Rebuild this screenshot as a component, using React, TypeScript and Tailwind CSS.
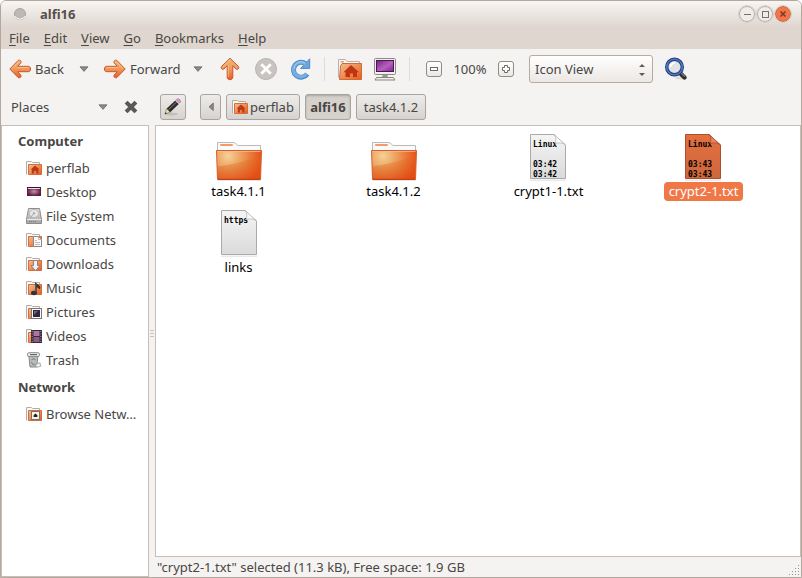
import React, { useState } from "react";

type FolderKind =
  | "home"
  | "documents"
  | "downloads"
  | "music"
  | "pictures"
  | "videos"
  | "network";

function Gradients() {
  return (
    <svg className="absolute h-0 w-0" aria-hidden="true">
      <defs>
        <linearGradient id="arrow" x1="0" y1="0" x2="0" y2="1">
          <stop offset="0" stopColor="#f3b878" />
          <stop offset="0.5" stopColor="#ee9a5c" />
          <stop offset="1" stopColor="#ec5a26" />
        </linearGradient>
        <radialGradient id="folder" gradientUnits="userSpaceOnUse" cx="13" cy="23" r="34">
          <stop offset="0" stopColor="#f5d197" />
          <stop offset="0.45" stopColor="#ec9855" />
          <stop offset="1" stopColor="#ea4c16" />
        </radialGradient>
        <linearGradient id="shade" x1="0" y1="0" x2="0" y2="1">
          <stop offset="0" stopColor="#d9741e" stopOpacity="0.35" />
          <stop offset="1" stopColor="#dc4a10" stopOpacity="0.75" />
        </linearGradient>
        <linearGradient id="small" x1="0" y1="0" x2="1" y2="1">
          <stop offset="0" stopColor="#f3c08c" />
          <stop offset="1" stopColor="#ea5a1e" />
        </linearGradient>
        <linearGradient id="paper" x1="0" y1="0" x2="0" y2="1">
          <stop offset="0" stopColor="#f5f5f5" />
          <stop offset="1" stopColor="#dadada" />
        </linearGradient>
        <linearGradient id="paperSelected" x1="0" y1="0" x2="0" y2="1">
          <stop offset="0" stopColor="#e4703e" />
          <stop offset="1" stopColor="#cd673d" />
        </linearGradient>
        <linearGradient id="screen" x1="0" y1="0" x2="1" y2="1">
          <stop offset="0" stopColor="#762482" />
          <stop offset="0.55" stopColor="#b860c0" />
          <stop offset="1" stopColor="#7c2488" />
        </linearGradient>
        <linearGradient id="metal" x1="0" y1="0" x2="0" y2="1">
          <stop offset="0" stopColor="#dedede" />
          <stop offset="1" stopColor="#a5a5a5" />
        </linearGradient>
        <radialGradient id="aubergine">
          <stop offset="0" stopColor="#c88ab0" />
          <stop offset="1" stopColor="#5a1a3c" />
        </radialGradient>
      </defs>
    </svg>
  );
}

function Arrow({ turn = "" }: { turn?: string }) {
  return (
    <svg className={`shrink-0 ${turn}`} width="22" height="22" viewBox="0 0 22 22" aria-hidden="true">
      <path
        d="M0.8 11 L9 2.6 C10.5 1.4 13 3 11.8 4.9 L8.7 8.3 H19.3 C22.3 8.3 22.3 13.7 19.3 13.7 H8.7 L11.8 17.1 C13 19 10.5 20.6 9 19.4 Z"
        fill="url(#arrow)"
        stroke="#c9562b"
        strokeWidth="1"
        strokeLinejoin="round"
      />
      <path d="M3 10.5 L9.8 3.6 M8 9.4 H19" stroke="#f8d0a4" strokeWidth="0.8" fill="none" opacity="0.8" />
    </svg>
  );
}

function UpArrow() {
  return (
    <svg width="22" height="24" viewBox="0 0 22 24" aria-hidden="true">
      <path
        d="M11 1.2 L19.4 9.4 C20.6 11 19 13.2 17.1 12 L13.8 8.8 V20 C13.8 23.6 8.2 23.6 8.2 20 V8.8 L4.9 12 C3 13.2 1.4 11 2.6 9.4 Z"
        fill="url(#arrow)"
        stroke="#c9562b"
        strokeLinejoin="round"
      />
      <path d="M10.8 2.8 L4 9.6 M9.3 8.2 V20" stroke="#f8d0a4" strokeWidth="0.8" fill="none" opacity="0.8" />
    </svg>
  );
}

function Caret({ className = "" }: { className?: string }) {
  return (
    <svg className={className} width="10" height="6" viewBox="0 0 10 6" aria-hidden="true">
      <path d="M1 0.8 H9 L5 5.4 Z" fill="#8c8a87" stroke="#62605d" strokeWidth="0.7" />
    </svg>
  );
}

function StopIcon() {
  return (
    <svg width="24" height="24" viewBox="0 0 24 24" aria-hidden="true">
      <circle cx="12" cy="12" r="10.5" fill="#c9c4c2" stroke="#b9b4b2" />
      <path d="M8.3 8.3 L15.7 15.7 M15.7 8.3 L8.3 15.7" stroke="#fff" strokeWidth="2.8" strokeLinecap="square" />
    </svg>
  );
}

function ReloadIcon() {
  return (
    <svg width="22" height="24" viewBox="0 0 22 24" aria-hidden="true">
      <path d="M17.2 17 A7.5 7.5 0 1 1 15.8 7" fill="none" stroke="#4f8ac6" strokeWidth="5" />
      <path d="M19.7 1.8 V11.4 H10.6 Z" fill="#6aa5dd" stroke="#4f8ac6" strokeLinejoin="round" />
      <path d="M16.7 16.6 A7.2 7.2 0 1 1 15.6 7.3" fill="none" stroke="#76aee2" strokeWidth="3.4" />
      <path d="M4 12 A7 7 0 0 1 15 6" fill="none" stroke="#a9cdf0" strokeWidth="1" />
    </svg>
  );
}

function HomeIcon() {
  return (
    <svg width="26" height="24" viewBox="0 0 26 24" aria-hidden="true">
      <path d="M1.5 20.5 V2.5 H8.5 L10 4.5 H22.5 V20" fill="#f7f7f5" stroke="#b6b2ad" />
      <path d="M3.5 4.8 H7" stroke="#f0a070" strokeWidth="1.4" />
      <path d="M2.5 22.5 L3.5 9 L5 6.5 H24.5 V22.5 H3 Z" fill="url(#small)" stroke="#d06a32" />
      <path d="M14 8 L22 15.2 H20 V20 H16 V16.5 H13 V20 H8.5 V15.2 H6.5 Z" fill="#bd3512" />
    </svg>
  );
}

function ComputerIcon() {
  return (
    <svg width="24" height="24" viewBox="0 0 24 24" aria-hidden="true">
      <rect x="1.5" y="1.5" width="21" height="16" rx="1" fill="#eeeeea" stroke="#8d8b86" />
      <rect x="3.5" y="3.5" width="17" height="11" fill="url(#screen)" stroke="#4d1554" />
      <path d="M9.5 18 H14.5 L15 21 H9 Z" fill="#9b9994" />
      <path d="M3.5 20.5 H20.5 L22 23 H2 Z" fill="#f0f0ed" stroke="#878580" />
    </svg>
  );
}

function SearchIcon() {
  return (
    <svg width="24" height="24" viewBox="0 0 24 24" aria-hidden="true">
      <ellipse cx="17" cy="21" rx="6" ry="1.5" fill="#dcdad7" />
      <path d="M16 16 L20.5 20.5" stroke="#302d2b" strokeWidth="4.4" strokeLinecap="round" />
      <path d="M17 16 L21 19.6" stroke="#8b8782" strokeWidth="1.2" />
      <circle cx="10.5" cy="10" r="7.8" fill="#e3e3e3" stroke="#203a79" strokeWidth="3.4" />
      <circle cx="10.5" cy="10" r="7.8" fill="none" stroke="#4c78c4" strokeWidth="1.6" />
      <path d="M6.5 10 A4 4 0 0 1 10.5 6" stroke="#fff" strokeWidth="2" fill="none" />
    </svg>
  );
}

function SmallFolder({ kind }: { kind: FolderKind }) {
  return (
    <svg className="shrink-0" width="16" height="16" viewBox="0 0 16 16" aria-hidden="true">
      <path d="M0.5 14.5 V1.5 H5.5 L6.5 2.5 H13.5 V13.5" fill="#fafaf9" stroke="#b5aca6" />
      <path d="M2.5 14.5 V4.5 H15.5 V14.5 Z" fill="url(#small)" stroke="#d66b3c" />
      {kind === "home" && (
        <path d="M9 5.4 L13.6 9.6 H12.4 V13.5 H10.2 V11 H8 V13.5 H5.8 V9.6 H4.6 Z" fill="#b83a18" />
      )}
      {kind === "documents" && (
        <>
          <path d="M7.5 4.5 H12.5 L15.5 7.5 V14.5 H7.5 Z" fill="#fafafa" stroke="#888" />
          <path d="M12.5 4.5 V7.5 H15.5 M9 8.5 H11 M9 10.5 H14 M9 12.5 H14" fill="none" stroke="#bbb" />
        </>
      )}
      {kind === "downloads" && (
        <path d="M7.5 4.5 H11.5 V9.5 H14 L9.5 14.8 L5 9.5 H7.5 Z" fill="#f0f0f0" stroke="#858585" />
      )}
      {kind === "music" && (
        <>
          <path d="M9 13 V2 L14.5 6.8 L13.7 9.5 L10.8 7 V13 Z" fill="#333" />
          <ellipse cx="8" cy="13" rx="3" ry="2.2" fill="#333" />
          <path d="M9.8 3.5 V12" stroke="#888" strokeWidth="0.6" />
        </>
      )}
      {kind === "pictures" && (
        <>
          <rect x="5.5" y="4.5" width="10" height="10" fill="#fafafa" stroke="#777" />
          <rect x="7" y="6" width="7" height="7" fill="#32263e" />
          <path d="M8 7 H12 L8 11 Z" fill="#6c5e7c" />
        </>
      )}
      {kind === "videos" && (
        <>
          <rect x="5" y="2" width="11" height="13" fill="#3a2a35" />
          <rect x="7.5" y="3" width="6" height="5" fill="#a679a5" />
          <rect x="7.5" y="9" width="6" height="5" fill="#8d588d" />
          <path d="M6.2 3 V15 M14.9 3 V15" stroke="#c9bcc5" strokeWidth="0.8" strokeDasharray="1 1.5" />
        </>
      )}
      {kind === "network" && (
        <>
          <rect x="5.5" y="5.5" width="8" height="8" fill="#f3f3ec" stroke="#77746e" />
          <path d="M9.5 7.6 L11.4 9.2 V11 H7.6 V9.2 Z" fill="#222" />
        </>
      )}
    </svg>
  );
}

function DesktopIcon() {
  return (
    <svg className="shrink-0" width="16" height="16" viewBox="0 0 16 16" aria-hidden="true">
      <rect x="1" y="3" width="14" height="9" fill="url(#aubergine)" />
      <rect x="1" y="3" width="14" height="1" fill="#3b1529" />
      <path d="M2 4.5 H14" stroke="#e8dbe3" />
    </svg>
  );
}

function DiskIcon() {
  return (
    <svg className="shrink-0" width="16" height="16" viewBox="0 0 16 16" aria-hidden="true">
      <path d="M2.5 0.5 H13.5 L15.5 11.5 V15.5 H0.5 V11.5 Z" fill="url(#metal)" stroke="#8c8c8c" />
      <ellipse cx="8" cy="5.5" rx="4.7" ry="4" fill="#e6e6e6" stroke="#b8b8b8" />
      <circle cx="8" cy="5.3" r="1.2" fill="#b0b0b0" />
      <path d="M4 10 L7.5 6" stroke="#aaa" />
      <path d="M1 11.5 H15" stroke="#e8e8e8" />
      <path d="M3 13.5 H11" stroke="#777" strokeDasharray="1 1" />
    </svg>
  );
}

function TrashIcon() {
  return (
    <svg className="shrink-0" width="16" height="16" viewBox="0 0 16 16" aria-hidden="true">
      <path d="M2.8 3 L4 15 H10.5 L12.2 3 Z" fill="#b9bebb" stroke="#858a87" />
      <rect x="1.5" y="0.7" width="12" height="3.8" rx="1.5" fill="#e9ebea" stroke="#8a8f8c" />
      <path d="M4 2.6 H11" stroke="#666" strokeWidth="1.2" />
      <path d="M5.5 8 L7.5 6.5 L9.5 8 M5.3 10 L7 12.5 H9.5" stroke="#8b918e" fill="none" strokeWidth="1.3" />
      <path d="M9.5 12.5 L14 10.8 L14.7 14.3 L10.5 15.3 Z" fill="#f1f1f1" stroke="#999" strokeWidth="0.8" />
    </svg>
  );
}

function PencilIcon() {
  return (
    <svg width="20" height="18" viewBox="0 0 20 18" aria-hidden="true">
      <ellipse cx="8" cy="16" rx="7" ry="1.4" fill="#c2bfba" />
      <path d="M2 16 L3.6 10.7 L7.2 14.1 Z" fill="#f0e3a5" stroke="#8a8254" strokeWidth="0.7" />
      <path d="M3.7 10.5 L12.3 2.5 L15.8 6.1 L7.2 14.2 Z" fill="#2d2d2d" />
      <path d="M5.5 11.5 L13.8 4" stroke="#797979" />
      <path d="M12.3 2.6 L13.4 1.6 L16.8 5 L15.8 6.1 Z" fill="#c8cec8" />
      <path d="M13.4 1.6 C15.4 -0.6 19 2.6 16.8 5 Z" fill="#e2a0cb" stroke="#ad6694" strokeWidth="0.7" />
      <path d="M2 16 L2.6 14.2 L4 15.4 Z" fill="#222" />
    </svg>
  );
}

function FolderIcon() {
  return (
    <svg width="48" height="48" viewBox="0 0 48 48" aria-hidden="true">
      <path d="M2 46.5 H46 V48 H3 Z" fill="#e7e4e2" />
      <path d="M2.5 18 V9.5 H19 C21 9.5 21 12.5 24 12.5 H45.5 V18" fill="#fafafa" stroke="#bcbab8" />
      <rect x="5" y="11" width="13" height="2" rx="1" fill="#f39a6a" />
      <path d="M1.5 17.5 H46.5 L45.5 46.5 H2.5 Z" fill="url(#folder)" stroke="#d0602f" />
      <path d="M2 33.5 C20 31 35 27 46 21 L45 46 H3 Z" fill="url(#shade)" opacity="0.65" />
      <path d="M2.5 18.5 H45.5" stroke="#f7c08c" opacity="0.75" />
      <path d="M3 46.3 H45" stroke="#b93b10" />
    </svg>
  );
}

function TextFileIcon({ lines, selected }: { lines: string[]; selected: boolean }) {
  return (
    <svg width="38" height="48" viewBox="0 0 38 48" aria-hidden="true">
      <path d="M1 46.5 H37 V48 H1 Z" fill="#e9e9e9" />
      <path
        d="M1.5 1.5 H25 L36.5 12 V45.5 H1.5 Z"
        fill={selected ? "url(#paperSelected)" : "url(#paper)"}
        stroke={selected ? "#a9502c" : "#aaaaaa"}
      />
      <svg x="0" y="0" width="28" height="46">
        {lines.map((line, i) => (
          <text
            key={i}
            x="4"
            y={14 + i * 10}
            fontSize="8"
            fontWeight="bold"
            fontFamily="DejaVu Sans Mono, monospace"
            fill="#000"
          >
            {line}
          </text>
        ))}
      </svg>
      <path
        d="M25 1.5 C27 4 27.5 7.5 26 10.5 C30 9.2 34 10 36.5 12 Z"
        fill={selected ? "#e8875f" : "#fdfdfd"}
        stroke={selected ? "#a9502c" : "#b8b8b8"}
        strokeWidth="0.8"
      />
    </svg>
  );
}

const menus = ["File", "Edit", "View", "Go", "Bookmarks", "Help"];

const places: { label: string; icon: React.ReactNode }[] = [
  { label: "perflab", icon: <SmallFolder kind="home" /> },
  { label: "Desktop", icon: <DesktopIcon /> },
  { label: "File System", icon: <DiskIcon /> },
  { label: "Documents", icon: <SmallFolder kind="documents" /> },
  { label: "Downloads", icon: <SmallFolder kind="downloads" /> },
  { label: "Music", icon: <SmallFolder kind="music" /> },
  { label: "Pictures", icon: <SmallFolder kind="pictures" /> },
  { label: "Videos", icon: <SmallFolder kind="videos" /> },
  { label: "Trash", icon: <TrashIcon /> },
];

const files: { name: string; lines?: string[] }[] = [
  { name: "task4.1.1" },
  { name: "task4.1.2" },
  { name: "crypt1-1.txt", lines: ["Linux", "", "03:42", "03:42"] },
  { name: "crypt2-1.txt", lines: ["Linux", "", "03:43", "03:43"] },
  { name: "links", lines: ["https"] },
];

function TitleBar() {
  const round = "flex size-4 items-center justify-center rounded-full border outline outline-[#d8d0ca]";
  return (
    <header className="flex h-[26px] shrink-0 items-center bg-gradient-to-b from-[#f8f6f3] to-[#dfd6cf] pr-[10px] pl-3">
      <svg width="14" height="14" viewBox="0 0 14 14" aria-hidden="true">
        <circle cx="7" cy="7" r="5.5" fill="#bcb9b5" stroke="#a8a4a0" />
        <path d="M2 9 A5.5 5.5 0 0 0 12 9" fill="none" stroke="#fff" />
      </svg>
      <h1 className="ml-[13px] flex-1 text-[13px] font-bold text-[#56504b]">alfi16</h1>
      <div className="flex gap-[2px]">
        <button aria-label="Minimize" className={`${round} border-[#b5aea8] bg-[#f0ece8]`}>
          <svg width="8" height="8" viewBox="0 0 8 8"><path d="M1 4.5 H8" stroke="#77716b" /></svg>
        </button>
        <button aria-label="Maximize" className={`${round} border-[#b5aea8] bg-[#f0ece8]`}>
          <svg width="8" height="8" viewBox="0 0 8 8"><rect x="1.5" y="1.5" width="6" height="6" fill="none" stroke="#77716b" /></svg>
        </button>
        <button aria-label="Close" className={`${round} border-[#c6694a] bg-[#f3764a]`}>
          <svg width="8" height="8" viewBox="0 0 8 8"><path d="M1.5 1.5 L6.5 6.5 M6.5 1.5 L1.5 6.5" stroke="#7b3722" strokeWidth="1.5" /></svg>
        </button>
      </div>
    </header>
  );
}

function Toolbar() {
  const separator = "h-6 w-px shrink-0 bg-[#dedbd8]";
  const zoom = "flex size-4 items-center justify-center rounded-[3px] border border-[#8f8b87] bg-gradient-to-b from-white to-[#eae8e5]";
  return (
    <div className="flex h-10 shrink-0 items-center pl-2">
      <button className="flex w-[58px] items-center gap-1"><Arrow />Back</button>
      <button aria-label="Back history" className="ml-3"><Caret /></button>
      <button className="ml-[15px] flex w-20 items-center gap-1"><Arrow turn="-scale-x-100" />Forward</button>
      <button aria-label="Forward history" className="ml-[9px]"><Caret /></button>
      <button aria-label="Open parent" className="ml-4"><UpArrow /></button>
      <button aria-label="Stop" className="ml-[13px]"><StopIcon /></button>
      <button aria-label="Reload" className="ml-3"><ReloadIcon /></button>
      <div className={`ml-3 ${separator}`} />
      <button aria-label="Home" className="ml-3"><HomeIcon /></button>
      <button aria-label="Computer" className="ml-[10px]"><ComputerIcon /></button>
      <div className={`ml-3 ${separator}`} />
      <button aria-label="Zoom out" className={`ml-4 ${zoom}`}>
        <svg width="10" height="10" viewBox="0 0 10 10"><rect x="1.5" y="3.5" width="7" height="3" fill="#fff" stroke="#6d6965" /></svg>
      </button>
      <span className="w-14 text-center">100%</span>
      <button aria-label="Zoom in" className={zoom}>
        <svg width="10" height="10" viewBox="0 0 10 10"><path d="M3.5 1.5 H6.5 V3.5 H8.5 V6.5 H6.5 V8.5 H3.5 V6.5 H1.5 V3.5 H3.5 Z" fill="#fff" stroke="#6d6965" /></svg>
      </button>
      <div className="relative ml-[15px] w-[124px]">
        <select aria-label="View mode" className="h-7 w-full appearance-none rounded-[3px] border border-[#b6aba1] bg-gradient-to-b from-white to-[#ebe7e4] pl-[5px]">
          <option>Icon View</option>
          <option>List View</option>
          <option>Compact View</option>
        </select>
        <svg className="pointer-events-none absolute top-2 right-[7px]" width="8" height="14" viewBox="0 0 8 14" aria-hidden="true">
          <path d="M1 4 L4 1 L7 4 Z M1 10 L4 13 L7 10 Z" fill="#5f5c59" />
        </svg>
      </div>
      <button aria-label="Search" className="ml-[11px]"><SearchIcon /></button>
    </div>
  );
}

function PathBar() {
  const base = "flex h-[26px] items-center justify-center rounded-[3px] border border-[#aaa49e]";
  const raised = `${base} bg-gradient-to-b from-[#eeecea] to-[#d6d3cf]`;
  return (
    <nav aria-label="Path" className="flex h-9 shrink-0 items-center gap-[5px] pl-[5px]">
      <button aria-label="Edit location" className={`${raised} mr-[9px] w-[26px]`}><PencilIcon /></button>
      <button aria-label="Previous folders" className={`${raised} w-[21px]`}>
        <svg width="6" height="10" viewBox="0 0 6 10"><path d="M5.3 1 V8.6 L1 4.8 Z" fill="#8a8784" stroke="#5f5c59" strokeWidth="0.7" /></svg>
      </button>
      <button className={`${raised} w-[74px] gap-[2px]`}><SmallFolder kind="home" />perflab</button>
      <button aria-current="page" className={`${base} w-[46px] bg-[#d5d1cc] font-bold shadow-[inset_0_1px_2px_#aaa49e]`}>alfi16</button>
      <button className={`${raised} w-[70px]`}>task4.1.2</button>
    </nav>
  );
}

function PlaceRow({ icon, label }: { icon: React.ReactNode; label: string }) {
  return (
    <li>
      <button className="flex h-6 w-full items-center gap-1 pr-2 pl-6 text-left">
        {icon}
        <span className="truncate">{label}</span>
      </button>
    </li>
  );
}

function Sidebar() {
  return (
    <aside className="flex w-[148px] shrink-0 flex-col">
      <div className="flex h-9 shrink-0 items-center pr-[11px] pl-[10px]">
        <button className="flex flex-1 items-center justify-between">Places<Caret /></button>
        <button aria-label="Close side pane" className="ml-4">
          <svg width="14" height="14" viewBox="0 0 14 14"><path d="M3.5 3.5 L10.5 10.5 M10.5 3.5 L3.5 10.5" stroke="#5b5855" strokeWidth="4" strokeLinecap="square" /></svg>
        </button>
      </div>
      <div className="min-h-0 flex-1 overflow-hidden border border-[#c9beb5] bg-white">
        <h2 className="h-[30px] pl-4 leading-[30px] font-bold">Computer</h2>
        <ul>{places.map((p) => <PlaceRow key={p.label} {...p} />)}</ul>
        <h2 className="h-[30px] pl-4 leading-[30px] font-bold">Network</h2>
        <ul><PlaceRow label="Browse Netw…" icon={<SmallFolder kind="network" />} /></ul>
      </div>
    </aside>
  );
}

function FileView({ selected, onSelect }: { selected: string; onSelect: (name: string) => void }) {
  return (
    <main className="min-h-0 flex-1 overflow-hidden border border-[#c9beb5] bg-white pt-[7px] pl-[5px]">
      <ul className="grid grid-cols-[repeat(auto-fill,155px)] text-black">
        {files.map((file) => {
          const active = file.name === selected;
          return (
            <li key={file.name} className="flex h-[76px] justify-center">
              <button onClick={() => onSelect(file.name)} className="flex flex-col items-center self-start">
                {file.lines ? <TextFileIcon lines={file.lines} selected={active} /> : <FolderIcon />}
                <span className={`mt-px h-[19px] rounded-[4px] px-[5px] leading-[18px] ${active ? "bg-[#f07746] text-white" : ""}`}>
                  {file.name}
                </span>
              </button>
            </li>
          );
        })}
      </ul>
    </main>
  );
}

export default function App() {
  const [selected, setSelected] = useState("crypt2-1.txt");
  return (
    <div className="flex h-screen flex-col overflow-hidden rounded-t-[6px] border border-[#b3a79e] bg-[#f4f3f1] font-['Noto_Sans',sans-serif] text-[13px] leading-5 text-[#494643]">
      <Gradients />
      <TitleBar />
      <nav aria-label="Menu" className="flex h-[22px] shrink-0 items-center gap-[14px] bg-[#dfd6cf] pl-2">
        {menus.map((menu) => (
          <button key={menu}><span className="underline underline-offset-2">{menu[0]}</span>{menu.slice(1)}</button>
        ))}
      </nav>
      <Toolbar />
      <div className="flex min-h-0 flex-1">
        <Sidebar />
        <div className="flex w-[6px] shrink-0 flex-col items-center justify-center gap-[2px]">
          {[0, 1, 2].map((n) => <div key={n} className="h-px w-1 bg-[#c8c3be]" />)}
        </div>
        <div className="flex min-w-0 flex-1 flex-col">
          <PathBar />
          <FileView selected={selected} onSelect={setSelected} />
          <footer className="flex h-5 shrink-0 items-center justify-between pl-[2px]">
            <span>"{selected}" selected (11.3 kB), Free space: 1.9 GB</span>
            <svg className="self-end" width="12" height="12" viewBox="0 0 12 12" aria-hidden="true">
              <path
                d="M9 0h1v1h-1z M6 3h1v1h-1z M9 3h1v1h-1z M3 6h1v1h-1z M6 6h1v1h-1z M9 6h1v1h-1z M0 9h1v1h-1z M3 9h1v1h-1z M6 9h1v1h-1z M9 9h1v1h-1z"
                fill="#99938e"
              />
            </svg>
          </footer>
        </div>
      </div>
    </div>
  );
}
